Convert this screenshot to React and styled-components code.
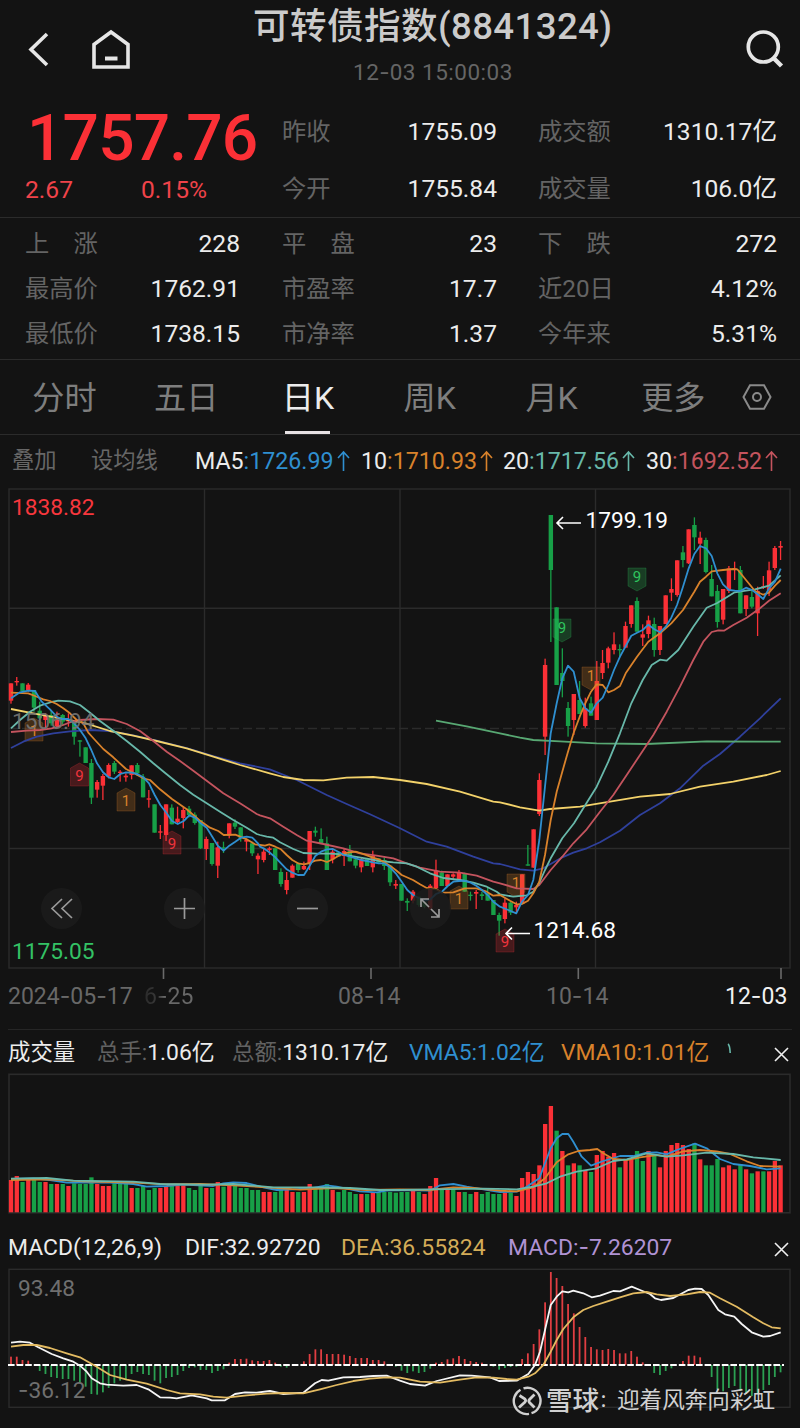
import React from 'react';
import styled, { createGlobalStyle } from 'styled-components';

const RED = '#fb3036';
const GREEN = '#17a047';
const BLUE = '#2f8fd0';
const ORANGE = '#d9822b';
const TEAL = '#68b8aa';
const ROSE = '#c4545e';
const NAVY = '#2f409c';
const YELLOW = '#f3d26a';
const LINE = '#2b2b2b';
const FONT = "Roboto, 'Noto Sans CJK SC', sans-serif";

const GlobalStyle = createGlobalStyle`
	* {
		box-sizing: border-box;
	}
	body {
		margin: 0;
		background: #131313;
		color: #ececec;
		font-family: ${FONT};
		font-size: 24.6px;
	}
	svg {
		display: block;
	}
`;

const Page = styled.div`
	position: relative;
	width: 800px;
	height: 1428px;
	overflow: hidden;
	background: #131313;
`;

/* ---------- header ---------- */

const Header = styled.header`
	display: grid;
	grid-template-columns: 90px 90px 1fr 180px;
	height: 103px;
`;

const HeaderIcon = styled.div`
	padding: ${p => p.$pad};
`;

const TitleBox = styled.div`
	padding: 1px 0 0 73px;
	white-space: nowrap;
`;

const Title = styled.h1`
	margin: 0;
	height: 52px;
	line-height: 52px;
	font-size: 36.6px;
	font-weight: 500;
	letter-spacing: 0.4px;
	color: #cbcbcb;
`;

const Time = styled.div`
	padding-left: 100px;
	height: 40px;
	line-height: 38px;
	font-size: 22.5px;
	letter-spacing: 0.5px;
	color: #656565;
`;

const Dash = styled.span`
	font-family: Inter, sans-serif;
	letter-spacing: 0;
`;

function Num({ children }) {
	const parts = children.split('-');
	return parts.map((part, i) => (
		<React.Fragment key={i}>
			{i > 0 && <Dash>-</Dash>}
			{part}
		</React.Fragment>
	));
}

/* ---------- quote ---------- */

const Quote = styled.section`
	display: grid;
	grid-template-columns: 257px 256px 1fr;
	height: 115px;
	padding: 0 23px 0 25px;
	border-bottom: 1px solid ${LINE};
`;

const PriceBox = styled.div`
	color: ${RED};
`;

const Price = styled.div`
	height: 71px;
	line-height: 72px;
	font-size: 64px;
	font-weight: 500;
	letter-spacing: -0.8px;
	margin-left: 2px;
`;

const Change = styled.div`
	display: grid;
	grid-template-columns: 116px 1fr;
	height: 32px;
	line-height: 32px;
	color: #f0434a;
`;

const Column = styled.div`
	padding-right: ${p => p.$gap || '0'};
`;

const Row = styled.div`
	display: flex;
	justify-content: space-between;
	height: ${p => p.$height};
	line-height: ${p => p.$height};
	white-space: pre;
`;

const Label = styled.span`
	font-size: 24.3px;
	color: #646464;
`;

const Stats = styled.section`
	display: grid;
	grid-template-columns: 257px 256px 1fr;
	height: 142px;
	padding: 3px 23px 0 25px;
	border-bottom: 1px solid ${LINE};
`;

/* ---------- tabs ---------- */

const Tabs = styled.nav`
	display: grid;
	grid-template-columns: repeat(6, 121.8px) 1fr;
	height: 75px;
	padding-left: 3.5px;
	border-bottom: 1px solid ${LINE};
`;

const Tab = styled.div`
	display: flex;
	flex-direction: column;
	justify-content: space-between;
	align-items: center;
	height: 74px;
	line-height: 76px;
	font-size: 32.2px;
	color: ${p => (p.$active ? '#ececec' : '#7e7e7e')};
	&::after {
		content: '';
		width: 45px;
		height: 3px;
		margin-top: -5px;
		background: ${p => (p.$active ? '#e6e1e3' : 'transparent')};
	}
`;

const GearBox = styled.div`
	padding: 22px 0 0 7.5px;
`;

const MaRow = styled.div`
	display: grid;
	grid-template-columns: 79px 104px 166px 142px 143px 1fr;
	height: 53px;
	line-height: 50px;
	padding-left: 12px;
	font-size: 23.2px;
	white-space: nowrap;
`;

const MaTool = styled.span`
	font-size: 22.3px;
	color: #676767;
`;

const MaItem = styled.span`
	display: flex;
	align-items: center;
	height: 51px;
	color: ${p => p.$color};
	svg {
		margin-left: 3px;
	}
`;

const White = styled.b`
	font-weight: 400;
	color: #ececec;
`;

/* ---------- charts ---------- */

const ChartBox = styled.div`
	position: relative;
	height: ${p => p.$height};
`;

const Tools = styled.div`
	position: absolute;
	left: 41px;
	top: 400px;
	display: flex;
	gap: 82px;
`;

const RoundButton = styled.div`
	width: 41px;
	height: 41px;
	border-radius: 50%;
	background: rgba(28, 28, 28, 0.86);
`;

const Dates = styled.div`
	display: grid;
	grid-template-columns: 136px 194px 208px 179px 1fr;
	height: 51px;
	margin: 0 8px;
	line-height: 35px;
	font-size: 23px;
	color: #686868;
	border-bottom: 1px solid #262626;
`;

const FadeDate = styled.span`
	background: linear-gradient(90deg, #2a2a2a, #3a3a3a 14px, #686868 20px);
	background-clip: text;
	color: transparent;
`;

const LastDate = styled.span`
	color: #f2f2f2;
`;

const IndexRow = styled.div`
	display: grid;
	grid-template-columns: ${p => p.$cols};
	height: ${p => p.$height};
	line-height: ${p => p.$line};
	padding-left: 8px;
	font-size: 22.9px;
	white-space: nowrap;
`;

const IndexItem = styled.span`
	color: ${p => p.$color || '#ececec'};
	font-size: ${p => p.$size || 'inherit'};
`;

const Gray = styled.span`
	color: #626262;
	font-size: 22.4px;
`;

const CloseBox = styled.span`
	align-self: center;
	padding: 3px 0 0 1px;
`;

const Watermark = styled.div`
	position: absolute;
	left: 512px;
	top: 1386px;
	display: flex;
	align-items: center;
	height: 30px;
	line-height: 32px;
	font-size: 22.6px;
	color: #d0d0d0;
	white-space: nowrap;
`;

const Brand = styled.b`
	margin-left: 4px;
	font-size: 26.5px;
	font-weight: 500;
`;

const Colon = styled.span`
	font-size: 18px;
`;

/* candles: [up, bodyTop, bodyBottom, wickTop, wickBottom], three units per pixel */
const CANDLES = [
	{
		base: 660,
		rows: [
			[1, 70, 122, 70, 131], [1, 63, 67, 51, 77], [0, 70, 93, 70, 95], [1, 74, 90, 69, 95],
			[0, 90, 143, 90, 155], [0, 152, 175, 125, 180], [1, 165, 180, 160, 205], [0, 165, 190, 150, 197],
			[1, 180, 198, 155, 200], [0, 165, 185, 162, 196], [1, 178, 184, 160, 200], [0, 185, 230, 180, 254],
			[0, 241, 245, 240, 290], [0, 262, 309, 262, 309], [0, 309, 413, 297, 432], [1, 366, 389, 360, 413],
			[1, 348, 377, 342, 420], [1, 315, 350, 310, 355], [0, 309, 335, 303, 342], [1, 335, 339, 330, 365],
			[1, 347, 352, 340, 365], [1, 316, 345, 316, 358], [0, 315, 340, 309, 348], [0, 350, 412, 342, 412],
			[1, 415, 419, 390, 443], [0, 433, 518, 433, 518], [1, 514, 518, 495, 537], [1, 433, 525, 433, 543],
			[0, 443, 493, 433, 493], [1, 476, 486, 440, 492], [1, 450, 474, 440, 505], [0, 446, 465, 438, 472],
			[0, 464, 489, 457, 494], [0, 480, 565, 480, 567], [1, 537, 567, 530, 600], [0, 549, 612, 549, 617],
			[1, 562, 617, 545, 654], [0, 562, 566, 545, 579], [1, 490, 527, 490, 535], [0, 488, 500, 478, 507],
			[0, 502, 535, 502, 545], [1, 540, 545, 535, 574], [0, 550, 580, 545, 588], [1, 587, 598, 580, 642],
		],
	},
	{
		base: 780,
		rows: [
			[1, 215, 240, 205, 247], [1, 205, 210, 200, 225], [0, 205, 270, 205, 270], [0, 276, 312, 265, 320],
			[1, 300, 330, 276, 343], [1, 257, 293, 253, 293], [0, 250, 270, 247, 278], [1, 258, 268, 245, 270],
			[1, 153, 250, 153, 270], [0, 152, 158, 140, 170], [0, 177, 192, 145, 192], [0, 190, 270, 170, 270],
			[1, 215, 238, 205, 250], [0, 217, 230, 217, 230], [1, 213, 228, 205, 258], [0, 213, 244, 195, 244],
			[0, 238, 257, 230, 265], [1, 238, 262, 232, 277], [0, 237, 258, 237, 258], [1, 228, 262, 212, 277],
			[0, 235, 248, 235, 248], [0, 240, 258, 232, 270], [0, 257, 307, 257, 318], [1, 312, 317, 300, 327],
			[0, 312, 362, 312, 362], [0, 363, 368, 355, 393], [1, 335, 362, 330, 370], [0, 350, 375, 350, 380],
			[0, 365, 380, 360, 385], [1, 317, 385, 312, 390], [1, 272, 325, 239, 325], [0, 277, 318, 272, 318],
			[1, 283, 318, 283, 318], [1, 283, 290, 280, 300], [1, 277, 303, 270, 303], [0, 281, 335, 278, 335],
			[0, 344, 348, 335, 362], [1, 336, 341, 330, 387], [0, 343, 348, 335, 360], [0, 340, 362, 320, 362],
			[0, 360, 405, 360, 405], [0, 405, 422, 398, 467], [1, 368, 417, 355, 430], [0, 368, 398, 365, 405],
			[1, 375, 382, 365, 400], [1, 283, 372, 283, 372],
		],
	},
	{
		base: 490,
		rows: [
			[0, 1123, 1127, 1065, 1127], [1, 1018, 1133, 1018, 1133], [1, 870, 972, 850, 978], [1, 525, 740, 506, 795],
			[0, 75, 240, 75, 456], [0, 352, 585, 352, 585], [0, 549, 573, 475, 622], [0, 654, 708, 636, 740],
			[1, 612, 690, 612, 735], [0, 630, 672, 573, 672], [1, 655, 708, 623, 713], [0, 640, 677, 620, 677],
			[1, 573, 690, 513, 690], [1, 519, 549, 480, 567], [1, 475, 518, 470, 535], [1, 463, 480, 427, 493],
			[0, 477, 481, 463, 500], [1, 408, 473, 395, 473], [1, 346, 402, 346, 413], [0, 333, 425, 322, 425],
			[1, 433, 443, 403, 468], [1, 391, 432, 377, 445], [0, 402, 480, 383, 500], [1, 408, 480, 408, 495],
			[1, 316, 402, 316, 402], [1, 297, 308, 265, 333], [1, 211, 315, 211, 320], [0, 187, 210, 168, 232],
			[1, 118, 220, 118, 222], [0, 105, 142, 82, 180], [1, 143, 161, 125, 222], [0, 150, 246, 143, 250],
			[0, 267, 319, 225, 319], [0, 303, 396, 285, 413], [1, 297, 389, 297, 403], [1, 235, 303, 228, 309],
			[1, 235, 239, 215, 270], [0, 240, 370, 228, 370], [1, 316, 357, 316, 378], [0, 321, 350, 303, 355],
			[1, 303, 370, 290, 438], [1, 289, 293, 258, 297], [1, 241, 300, 215, 318], [1, 174, 234, 168, 240],
			[1, 168, 173, 153, 210],
		],
	},
];

/* price lines, every piece as [originX, originY, points] */
const PRICE_LINES = [
	{
		color: NAVY,
		parts: [
			[0, 660, '33,264 70,245 110,230 160,220 210,214 270,210 330,213 400,226 470,242 560,264 640,288 720,310 809,328'],
			[260, 780, '110,0 200,45 260,72 330,103 420,145 500,185 560,200 640,230 700,250'],
			[500, 490, '0,1122 60,1138 100,1142 130,1135 187,1102 220,1088 260,1075 300,1057 360,1022 420,975 480,940 540,895 610,827 660,792 720,740 780,685 842,625'],
		],
	},
	{
		color: YELLOW,
		parts: [
			[0, 660, '33,147 100,160 180,175 250,188 330,213 400,227 470,243 560,265 640,290 720,315 809,340'],
			[260, 780, '70,-9 130,0 190,1 260,-7 340,-9 420,0 500,12 600,35 700,65'],
			[500, 490, '0,937 60,952 118,962 150,957 240,950 330,935 420,920 510,912 600,890 700,875 800,855 842,843'],
		],
	},
	{
		color: '#58a873',
		parts: [[500, 490, '-192,692 -100,709 0,730 60,743 100,750 180,754 290,760 440,762 620,754 842,755']],
	},
	{
		color: ROSE,
		parts: [
			[0, 660, '33,216 80,212 120,210 155,205 190,195 215,185 240,180 290,177 340,179 380,192 420,213 460,243 500,275 540,303 580,332 630,370 670,400 720,430 770,462'],
			[260, 780, '0,106 30,115 70,140 110,165 140,182 190,192 250,205 300,220 350,227 400,235 440,250 480,263 540,275 600,278 650,287 700,305'],
			[500, 490, '0,1180 50,1195 100,1197 118,1185 152,1140 187,1100 220,1060 260,1018 300,965 340,915 380,855 420,795 460,735 500,665 540,590 580,510 610,455 635,426 655,421 672,422 700,405 740,383 780,355 807,332 842,310'],
		],
	},
	{
		color: TEAL,
		parts: [
			[0, 660, '33,205 60,180 90,155 120,137 155,126 175,122 210,124 240,135 270,158 300,183 340,212 380,243 420,275 460,310 500,343 540,375 580,404 620,430 660,455 700,480 740,503 770,522'],
			[260, 780, '0,165 20,170 40,173 60,187 100,207 130,219 170,221 210,221 250,223 280,229 320,236 360,243 400,247 440,250 470,260 510,280 550,294 600,300 640,308 680,320 710,335'],
			[500, 490, '0,1213 40,1220 80,1216 100,1205 118,1178 135,1140 152,1105 187,1045 222,1000 256,945 290,890 325,815 360,730 394,640 428,570 455,525 480,509 500,512 535,480 580,410 620,353 650,340 680,322 704,307 738,302 765,298 807,287 842,256'],
		],
	},
	{
		color: ORANGE,
		parts: [
			[0, 660, '33,98 85,100 105,108 130,118 150,123 170,132 190,145 210,160 230,180 250,190 265,218 285,240 310,267 340,292 378,327 412,345 430,355 450,360 480,388 516,417 560,448 600,482 630,503 655,513 671,525 706,524 740,538 765,553'],
			[260, 780, '0,195 15,197 28,193 46,200 63,208 80,225 97,240 114,250 132,253 149,249 166,242 183,240 201,246 218,238 235,228 252,220 270,217 287,215 304,220 321,226 339,233 356,238 373,247 390,257 407,270 425,285 459,300 480,313 500,324 528,327 546,338 580,337 614,325 649,325 680,335 700,347'],
			[500, 490, '0,1215 30,1232 50,1243 66,1242 84,1232 100,1210 118,1175 135,1095 152,990 170,905 187,845 204,785 221,728 239,680 256,640 273,605 290,583 308,585 325,607 342,600 360,588 377,550 411,500 445,455 480,430 514,400 549,360 583,305 600,275 618,260 635,244 669,240 700,237 712,238 738,270 765,303 790,314 807,308 825,287 842,270'],
		],
	},
	{
		color: BLUE,
		parts: [
			[0, 660, '33,115 60,97 85,92 105,93 125,125 150,148 170,170 185,177 205,177 222,190 240,210 257,235 274,270 291,310 309,337 326,352 343,357 361,342 378,337 395,338 412,342 430,352 447,370 464,405 481,435 498,457 516,483 533,492 551,483 568,466 585,473 602,490 620,503 637,530 654,558 671,572 688,557 706,545 723,533 740,530 757,533 774,550'],
			[260, 780, '0,200 11,205 28,217 46,232 63,250 80,268 97,278 114,285 132,285 149,257 166,228 183,215 201,208 218,207 235,215 252,225 270,230 287,235 304,240 321,243 339,247 356,250 373,250 390,262 407,280 425,305 442,330 459,345 477,355 494,362 511,358 528,342 546,335 563,318 580,305 597,303 614,302 632,308 649,317 666,330 683,345 700,365'],
			[500, 490, '0,1250 25,1260 49,1270 66,1235 84,1215 100,1170 118,1050 135,890 152,730 170,640 187,565 204,527 221,545 239,625 256,655 273,668 290,640 308,623 325,585 342,540 360,500 377,468 394,437 411,428 428,420 445,404 463,418 480,427 497,410 514,383 531,345 549,290 566,235 583,192 600,168 618,175 635,198 652,250 669,283 687,300 704,302 721,303 738,293 756,300 773,313 790,327 807,295 825,275 842,236'],
		],
	},
];

const VOLUME =
	'r660 r648 g666 r660 g655 g666 r666 g672 r672 g672 r678 g670 g672 g672 g652 r672 r678 r678 g670 g670 g670 r684 g684 g678 g690 g684 r684 r680 g678 r676 r676 g684 g690 g678 r684 g684 r666 g680 r676 g676 g684 g684 g690 g690 r696 r696 g696 g690 r690 r696 g696 r696 r672 g684 g684 g672 r690 g696 g690 g696 g702 r702 g702 r698 g696 g696 g696 g698 ' +
	'g696 g696 r690 g696 r702 r678 r654 g684 r690 g688 r696 g696 g702 r696 g702 g696 g702 g702 r698 g698 r708 r654 r636 r642 r616 r492 r438 g512 r573 g616 r610 g616 r630 g636 r585 r573 r590 r579 g622 r600 r598 g573 g603 r573 g587 r622 r573 r555 r549 r555 r567 g550 r598 g616 g616 g597 r622 r616 r628 g612 r628 g640 r634 g634 r634 r603 r616';

const VOLUME_LINES = [
	{
		color: BLUE,
		parts: [
			[0, 960, '33,657 100,655 150,660 200,668 270,668 330,668 400,672 440,680 500,678 550,674 640,678 670,670 700,667 740,669 790,682 830,690 880,688 940,684 980,676 1010,680 1080,694 1130,697 1160,692'],
			[400, 960, '0,690 90,692 120,676 160,672 200,680 250,688 300,696 350,695 380,680 418,655 435,610 452,565 470,535 487,522 505,522 520,545 545,590 573,617 610,603 660,588 700,588 740,578 770,577 800,583 830,570 885,551 920,565 960,597 1000,612 1050,618 1100,628 1142,625'],
		],
	},
	{
		color: ORANGE,
		parts: [
			[0, 960, '33,660 150,658 250,664 400,668 500,673 600,672 700,676 800,682 900,689 1000,684 1100,690'],
			[400, 960, '0,688 90,690 160,682 220,684 300,692 350,694 400,682 435,655 470,607 505,583 535,573 570,570 592,567 610,580 640,597 680,600 720,592 770,585 800,590 850,574 900,570 950,574 990,582 1040,604 1080,618 1142,620'],
		],
	},
	{
		color: TEAL,
		parts: [
			[0, 960, '33,656 140,654 220,662 400,665 480,672 620,674 700,672 820,682 940,682 1050,684 1140,690'],
			[400, 960, '0,690 90,688 250,686 350,688 400,680 440,670 480,650 530,635 590,625 640,603 680,598 740,580 800,590 850,586 920,578 1000,582 1060,592 1142,600'],
		],
	},
];

const MACD = [
	380, 380, 390, 392, 405, 423, 432, 441, 444, 447, 447, 452, 458, 470, 492, 494, 487, 474, 460, 452, 447, 432, 426, 432, 435, 452, 460, 444, 441, 435,
	423, 414, 412, 420, 420, 429, 423, 418, 398, 387, 387, 386, 391, 393, 393, 390, 398, 410, 413, 405, 405, 394, 372, 358, 358, 372, 372, 372, 374, 378,
	384, 384, 384, 390, 390, 394, 405, 410, 422, 429, 424, 429, 426, 416, 398, 396, 388, 385, 378, 387, 393, 396, 398, 405, 410, 419, 414, 411, 410, 387,
	370, 342, 298, 217, 126, 144, 168, 222, 250, 291, 321, 351, 358, 360, 357, 360, 370, 370, 363, 380, 397, 405, 429, 435, 423, 415, 405, 393, 377, 377,
	382, 405, 441, 477, 484, 474, 468, 483, 492, 498, 490, 480, 465, 441, 427,
];

const MACD_LINES = [
	{
		color: '#f5f5f5',
		parts: [
			[0, 1230, '33,338 60,335 90,338 115,352 155,372 190,385 220,395 240,407 260,425 275,445 300,460 320,464 370,467 410,465 445,478 480,502 510,503 530,505 575,496 620,505 635,511 675,511 705,492 735,487 770,488 810,483 850,492 910,488 945,460 965,450 985,452 1030,442 1080,441 1120,438 1160,437'],
			[400, 1230, '0,452 30,462 75,467 110,453 180,436 215,437 270,442 297,453 350,452 385,432 405,405 420,365 435,300 452,225 470,200 487,184 505,187 520,182 550,190 575,202 600,197 640,183 660,184 695,170 720,180 750,192 765,205 783,210 820,204 865,180 885,176 905,177 925,195 955,240 975,253 1003,260 1025,282 1055,307 1090,320 1110,318 1142,307'],
		],
	},
	{
		color: '#e3bb62',
		parts: [
			[0, 1230, '33,350 70,345 110,345 150,354 200,370 240,382 290,410 330,435 380,449 440,461 500,480 540,490 600,493 640,500 680,503 740,496 800,491 850,489 910,490 960,478 1010,465 1060,453 1110,446 1160,442'],
			[400, 1230, '0,443 60,455 120,458 180,449 230,442 280,443 320,447 350,449 385,440 405,430 430,405 452,365 470,330 490,297 520,262 550,240 580,228 620,215 660,202 700,190 740,186 770,193 810,198 860,193 900,186 930,188 960,205 1010,230 1060,262 1090,280 1115,292 1142,295'],
		],
	},
];

const BADGES = [
	{ x: 34, y: 718, n: 1, c: ORANGE, up: true },
	{ x: 79.5, y: 763, n: 9, c: '#f0343c', up: true },
	{ x: 126, y: 788, n: 1, c: ORANGE, up: true },
	{ x: 172, y: 831, n: 9, c: '#f0343c', up: true },
	{ x: 459, y: 886, n: 1, c: ORANGE, up: true },
	{ x: 505, y: 929, n: 9, c: '#f0343c', up: true },
	{ x: 516, y: 874, n: 1, c: ORANGE },
	{ x: 562, y: 619, n: 9, c: '#2fc45e' },
	{ x: 637, y: 568, n: 9, c: '#2fc45e' },
	{ x: 591, y: 667, n: 1, c: ORANGE },
];

const barX = i => 11 + i * 5.743;

const toPoints = parts =>
	parts
		.map(([ox, oy, pts]) =>
			pts
				.split(' ')
				.map(p => {
					const [x, y] = p.split(',').map(Number);
					return `${(ox + x / 3).toFixed(1)},${(oy + y / 3).toFixed(1)}`;
				})
				.join(' ')
		)
		.join(' ');

function Lines({ data }) {
	return data.map((l, i) => (
		<polyline key={i} points={toPoints(l.parts)} fill="none" stroke={l.color} strokeWidth="1.8" strokeLinejoin="round" />
	));
}

function Candles() {
	let n = 0;
	return CANDLES.map(group =>
		group.rows.map(([up, top, bottom, high, low]) => {
			const x = barX(n++);
			const y = v => group.base + v / 3;
			return (
				<g key={n} fill={up ? RED : GREEN}>
					<rect x={x - 0.65} y={y(high)} width="1.3" height={(low - high) / 3} />
					<rect x={x - 2.2} y={y(top)} width="4.4" height={(bottom - top) / 3} />
				</g>
			);
		})
	);
}

function Badge({ x, y, n, c, up }) {
	const d = up ? 'M0 0L9 5V23H-9V5Z' : 'M-9 0H9V18L0 23L-9 18Z';
	return (
		<g transform={`translate(${x} ${y})`}>
			<path d={d} fill={c} fillOpacity="0.24" stroke={c} strokeOpacity="0.3" strokeWidth="0.8" />
			<text x="0" y={up ? 18 : 14} fontSize="15" textAnchor="middle" fill={c}>{n}</text>
		</g>
	);
}

function PriceChart() {
	return (
		<ChartBox $height="491px">
			<svg width="800" height="491" viewBox="0 488 800 491" fontFamily={FONT} fontSize="22.7">
				<g fill="none" stroke={LINE} strokeWidth="1.4">
					<rect x="9" y="489" width="781" height="479" />
					<path d="M204.5 489V968M400 489V968M595.5 489V968M9 608.3H790M9 848.5H790" />
					<path d="M9 728.5H790" strokeDasharray="9 4" />
				</g>
				<path d="M163.5 968V979M371 968V979M578.3 968V979M781 968V979" stroke="#6a6a6a" strokeWidth="1.6" />
				<Candles />
				{BADGES.map((b, i) => <Badge key={i} {...b} />)}
				<Lines data={PRICE_LINES} />
				<text x="12" y="729" fill="#777" fillOpacity="0.9">1506.94</text>
				<text x="12" y="515" fill="#f8373d">1838.82</text>
				<text x="12" y="959" fill="#34c265">1175.05</text>
				<g fill="#fff">
					<text x="585.5" y="528">1799.19</text>
					<text x="533.5" y="938">1214.68</text>
				</g>
				<path d="M581 523H557M563 517L557 523L563 529M530 933.5H506M512 927.5L506 933.5L512 939.5" fill="none" stroke="#fff" strokeWidth="1.6" />
			</svg>
			<Tools>
				{['M21 11L11 20.5L21 30M31 11L21 20.5L31 30', 'M10 20.5H31M20.5 10V31', 'M10 20.5H31', 'M11 19V11H19M11 11L19 19M29 21V29H21M29 29L21 21'].map(d => (
					<RoundButton key={d}>
						<svg width="41" height="41" fill="none" stroke="#9a9a9a" strokeWidth="1.7">
							<path d={d} />
						</svg>
					</RoundButton>
				))}
			</Tools>
		</ChartBox>
	);
}

function VolumeChart() {
	return (
		<ChartBox $height="150px">
			<svg width="800" height="150" viewBox="0 1073 800 150">
				<rect x="9" y="1074.3" width="781" height="138.5" fill="none" stroke={LINE} strokeWidth="1.6" />
				{VOLUME.split(' ').map((v, i) => {
					const top = 960 + Number(v.slice(1)) / 3;
					return <rect key={i} x={barX(i) - 2.1} y={top} width="4.3" height={1212.3 - top} fill={v[0] === 'r' ? RED : GREEN} />;
				})}
				<Lines data={VOLUME_LINES} />
			</svg>
		</ChartBox>
	);
}

function MacdChart() {
	return (
		<ChartBox $height="150px">
			<svg width="800" height="150" viewBox="0 1268 800 150" fontFamily={FONT}>
				<rect x="9" y="1269.3" width="781" height="138" fill="none" stroke={LINE} strokeWidth="1.4" />
				{MACD.map((v, i) => (
					<rect key={i} x={barX(i) - 0.9} y={1230 + Math.min(v, 405) / 3} width="1.8" height={Math.abs(v - 405) / 3} fill={v < 405 ? '#e03e42' : '#2ba052'} />
				))}
				<path d="M8 1365H784" stroke="#fff" strokeWidth="1.8" strokeDasharray="6.6 2" />
				<g fill="#6f6f6f" fontSize="22.7">
					<text x="18" y="1295.5">93.48</text>
					<text x="18" y="1398"><tspan fontFamily="Inter">-</tspan>36.12</text>
				</g>
				<Lines data={MACD_LINES} />
			</svg>
		</ChartBox>
	);
}

function Close() {
	return (
		<CloseBox>
			<svg width="15" height="15" stroke="#f0f0f0" strokeWidth="1.6">
				<path d="M1 1L14 14M14 1L1 14" />
			</svg>
		</CloseBox>
	);
}

function Arrow() {
	return (
		<svg width="13" height="22" fill="none" stroke="currentColor" strokeWidth="1.6">
			<path d="M6.5 21V2M1 8L6.5 2L12 8" />
		</svg>
	);
}

function Pair({ label, value, height }) {
	return (
		<Row $height={height}>
			<Label>{label}</Label>
			<span>{value}</span>
		</Row>
	);
}

function App() {
	return (
		<Page>
			<GlobalStyle />
			<Header>
				<HeaderIcon $pad="32px 0 0 28px">
					<svg width="22" height="35" fill="none" stroke="#e6e6e6" strokeWidth="3.6">
						<path d="M19 2L3 17.5L19 33" />
					</svg>
				</HeaderIcon>
				<HeaderIcon $pad="29px 0 0 1px">
					<svg width="40" height="42" fill="none" stroke="#e6e6e6" strokeWidth="3.6">
						<path d="M3 15.5L20 3L37 15.5V38H3Z" />
						<path d="M14 29.5H26.5" strokeWidth="4" />
					</svg>
				</HeaderIcon>
				<TitleBox>
					<Title>可转债指数(8841324)</Title>
					<Time><Num>12-03 15:00:03</Num></Time>
				</TitleBox>
				<HeaderIcon $pad="28px 0 0 124px">
					<svg width="42" height="42" fill="none" stroke="#e6e6e6" strokeWidth="3.7">
						<circle cx="19.3" cy="19" r="15" />
						<path d="M29 29.5L37.5 38" strokeWidth="4.4" />
					</svg>
				</HeaderIcon>
			</Header>
			<Quote>
				<PriceBox>
					<Price>1757.76</Price>
					<Change><span>2.67</span><span>0.15%</span></Change>
				</PriceBox>
				<Column $gap="41px">
					<Pair label="昨收" value="1755.09" height="57px" />
					<Pair label="今开" value="1755.84" height="57px" />
				</Column>
				<Column>
					<Pair label="成交额" value="1310.17亿" height="57px" />
					<Pair label="成交量" value="106.0亿" height="57px" />
				</Column>
			</Quote>
			<Stats>
				<Column $gap="42px">
					<Pair label="上　涨" value="228" height="45px" />
					<Pair label="最高价" value="1762.91" height="45px" />
					<Pair label="最低价" value="1738.15" height="45px" />
				</Column>
				<Column $gap="41px">
					<Pair label="平　盘" value="23" height="45px" />
					<Pair label="市盈率" value="17.7" height="45px" />
					<Pair label="市净率" value="1.37" height="45px" />
				</Column>
				<Column>
					<Pair label="下　跌" value="272" height="45px" />
					<Pair label="近20日" value="4.12%" height="45px" />
					<Pair label="今年来" value="5.31%" height="45px" />
				</Column>
			</Stats>
			<Tabs>
				{['分时', '五日', '日K', '周K', '月K', '更多'].map(t => (
					<Tab key={t} $active={t === '日K'}>{t}</Tab>
				))}
				<GearBox>
					<svg width="30" height="30" fill="none" stroke="#8a8a8a" strokeWidth="2">
						<path d="M8 3.2H22L28.5 15L22 26.8H8L1.5 15Z" />
						<circle cx="15" cy="15" r="4" />
					</svg>
				</GearBox>
			</Tabs>
			<MaRow>
				<MaTool>叠加</MaTool>
				<MaTool>设均线</MaTool>
				<MaItem $color={BLUE}><White>MA5</White>:1726.99<Arrow /></MaItem>
				<MaItem $color={ORANGE}><White>10</White>:1710.93<Arrow /></MaItem>
				<MaItem $color={TEAL}><White>20</White>:1717.56<Arrow /></MaItem>
				<MaItem $color={ROSE}><White>30</White>:1692.52<Arrow /></MaItem>
			</MaRow>
			<PriceChart />
			<Dates>
				<span><Num>2024-05-17</Num></span>
				<FadeDate><Num>6-25</Num></FadeDate>
				<span><Num>08-14</Num></span>
				<span><Num>10-14</Num></span>
				<LastDate><Num>12-03</Num></LastDate>
			</Dates>
			<IndexRow $cols="89px 135px 177px 152px 166px 46px 1fr" $height="43px" $line="45px">
				<IndexItem $size="22.4px">成交量</IndexItem>
				<IndexItem><Gray>总手:</Gray>1.06亿</IndexItem>
				<IndexItem><Gray>总额:</Gray>1310.17亿</IndexItem>
				<IndexItem $color={BLUE}>VMA5:1.02亿</IndexItem>
				<IndexItem $color={ORANGE}>VMA10:1.01亿</IndexItem>
				<IndexItem $color={TEAL}>
					<svg width="6" height="34" fill="none" stroke="currentColor" strokeWidth="1.6">
						<path d="M1 14C2.5 15 3 19 3.2 23" />
					</svg>
				</IndexItem>
				<Close />
			</IndexRow>
			<VolumeChart />
			<IndexRow $cols="177px 156px 167px 265px 1fr" $height="45px" $line="49px">
				<IndexItem>MACD(12,26,9)</IndexItem>
				<IndexItem>DIF:32.92720</IndexItem>
				<IndexItem $color="#d4ac58">DEA:36.55824</IndexItem>
				<IndexItem $color="#b092d4"><Num>MACD:-7.26207</Num></IndexItem>
				<Close />
			</IndexRow>
			<MacdChart />
			<Watermark>
				<svg width="30" height="30" viewBox="0 0 30 30" fill="none" stroke="#d0d0d0" strokeWidth="2.4">
					<path d="M11.5 2.4A13 13 0 0 1 19.5 27.2M17 27.9A13 13 0 0 1 8.5 3.7" />
					<path d="M7.5 9.5L13 13Q14.2 14.5 13 16L7 21.5M22.5 8.5L17.5 13.5Q16.2 15 17.5 16.5L22.5 21.5" strokeWidth="2.8" />
				</svg>
				<Brand>雪球</Brand>
				<Colon>：</Colon>
				<span>迎着风奔向彩虹</span>
			</Watermark>
		</Page>
	);
}

export default App;
